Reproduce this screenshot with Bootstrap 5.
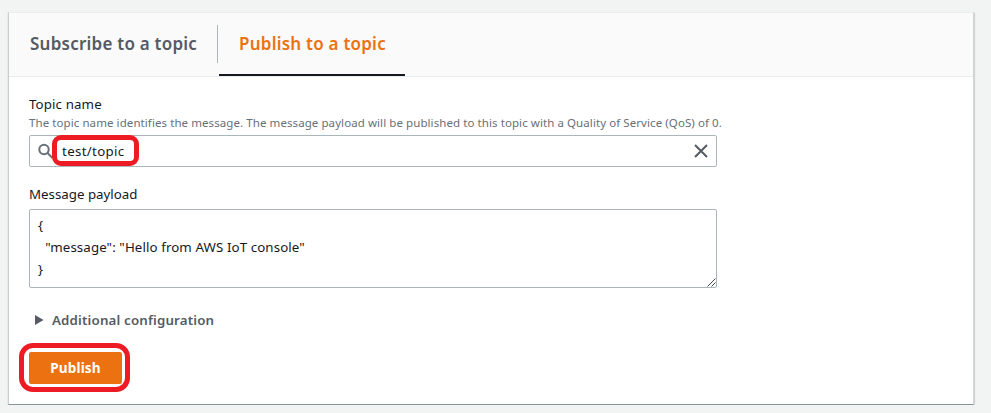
<!DOCTYPE html>
<html lang="en">
<head>
<meta charset="utf-8">
<meta name="viewport" content="width=device-width, initial-scale=1">
<title>MQTT test client</title>
<link href="https://cdn.jsdelivr.net/npm/bootstrap@5.3.0/dist/css/bootstrap.min.css" rel="stylesheet">
<style>
body{background:#f2f3f3;font-family:"Noto Sans","Open Sans",sans-serif;font-size:13.3px;line-height:22px;color:#16191f;overflow:hidden}
.panel{width:966px;height:393px;margin:12px 0 0 8px;border:1px solid #eaeded;border-color:#eaeded #d0d4d4 #879596 #c9cece;border-radius:0;box-shadow:0 1px 1px #001c2440,1px 1px 1px #001c241a}
.panel-tabs{height:64px;background:#fafafa;border-bottom:1px solid #eaeded}
.tab{height:63px;padding:0 20px;font-size:17px;font-weight:600;line-height:61px;letter-spacing:.23px;color:#545b64;white-space:nowrap;border:0;border-bottom:2px solid transparent;background:none;text-align:left}
.tab-sub{width:208px;padding-left:21px}
.tab-pub{width:186px;margin-left:1px;color:#ec7211;border-bottom-color:#16191f}
.divider{width:1px;height:38px;margin-top:12px;background:#aab7b8}
.panel-content{padding:16px 20px 0}
.field{width:688px}
.name-label{letter-spacing:.12px}
.hint{font-size:11.5px;line-height:16px;letter-spacing:.08px;color:#687078;white-space:nowrap}
.box{border:1px solid #aab7b8;border-radius:2px;background:#fff}
.search{height:32px;padding:0 8px}
.topic-value{letter-spacing:.33px}
.payload{display:block;width:688px;height:79px;padding:4px 8px;resize:none;outline:0;color:inherit;letter-spacing:.1px;overflow:hidden}
.grip{right:1px;bottom:1px}
.outline{border:5px solid #ed1c24;pointer-events:none}
.o-topic{left:22px;top:-1px;width:87px;height:31px;border-radius:9px}
.o-publish{left:-10px;top:-9px;width:111px;height:49px;border-radius:14px}
.expander{font-weight:600;color:#545b64;letter-spacing:.17px;margin-top:21px;padding-left:6px;gap:8px}
.action{margin-top:21px}
.publish{width:93px;height:32px;padding:0;border:0;border-radius:2px;background:#ec7211;color:#fff;font-size:13.6px;font-weight:700;letter-spacing:.1px}
.publish:hover{background:#eb5f07;color:#fff}
</style>
</head>
<body>
<main class="card panel">
  <div class="panel-tabs d-flex align-items-start" role="tablist">
    <button class="tab tab-sub" role="tab">Subscribe to a topic</button>
    <span class="divider"></span>
    <button class="tab tab-pub" role="tab">Publish to a topic</button>
  </div>
  <div class="panel-content">
    <div class="field">
      <label class="d-block name-label">Topic name</label>
      <div class="hint">The topic name identifies the message. The message payload will be published to this topic with a Quality of Service (QoS) of 0.</div>
      <div class="box search d-flex align-items-center position-relative mt-1">
        <svg width="16" height="16" viewBox="0 0 16 16" fill="none" stroke="#687078" stroke-width="2"><circle cx="6" cy="6.500" r="4.700"/><path d="M9.500 10l5 5"/></svg>
        <span class="ms-2 topic-value">test/topic</span>
        <svg class="ms-auto" width="14" height="14" viewBox="0 0 14 14" fill="none" stroke="#545b64" stroke-width="2"><path d="M1 1l12 12M13 1L1 13"/></svg>
        <span class="outline o-topic position-absolute"></span>
      </div>
    </div>
    <div class="field mt-3">
      <label class="d-block mb-1" for="payload">Message payload</label>
      <div class="position-relative">
        <textarea id="payload" class="box payload" spellcheck="false">{
  "message": "Hello from AWS IoT console"
}</textarea>
        <svg class="grip position-absolute" width="9" height="9" viewBox="0 0 9 9" fill="none" stroke="#444" stroke-width="1"><path d="M0.500 8.500l8-8M4.500 8.500l4-4"/></svg>
      </div>
    </div>
    <div class="expander d-flex align-items-center">
      <svg width="9" height="10" viewBox="0 0 9 10" fill="#545b64"><path d="M0 0L8.500 5 0 10z"/></svg>
      <span>Additional configuration</span>
    </div>
    <div class="action d-flex">
      <div class="position-relative">
        <button class="btn publish d-block">Publish</button>
        <span class="outline o-publish position-absolute"></span>
      </div>
    </div>
  </div>
</main>
<script src="https://cdn.jsdelivr.net/npm/bootstrap@5.3.0/dist/js/bootstrap.bundle.min.js"></script>
</body>
</html>
